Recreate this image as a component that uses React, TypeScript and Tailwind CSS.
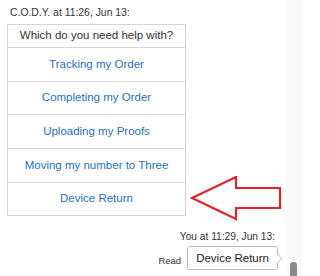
const options = [
  'Tracking my Order',
  'Completing my Order',
  'Uploading my Proofs',
  'Moving my number to Three',
  'Device Return',
];

export default function App() {
  return (
    <div className="flex h-[276px] w-[302px] overflow-hidden bg-white font-['Liberation_Sans',Arial,sans-serif]">
      <div className="relative flex-1">
        <div className="pl-[10px] pt-[6px] text-[10.4px] leading-[13px] text-[#333]">
          C.O.D.Y. at 11:26, Jun 13:
        </div>

        <div className="ml-[7px] mt-[5px] w-[179px] border border-[#d6d6d6] text-[11.5px]">
          <div className="flex h-[22px] items-center justify-center text-[#333]">
            Which do you need help with?
          </div>
          {options.map((opt) => (
            <div
              key={opt}
              className="flex h-[33.7px] items-center justify-center border-t border-[#d6d6d6] text-[#1f6fbf]"
            >
              {opt}
            </div>
          ))}
        </div>

        {/* annotation arrow */}
        <svg
          className="absolute left-[190px] top-[176px]"
          width="92"
          height="46"
          viewBox="0 0 92 46"
        >
          <polygon
            points="2,22 46,1 46,12 90,12 90,32 46,32 46,43"
            fill="none"
            stroke="#e3242b"
            strokeWidth="2.2"
            strokeLinejoin="miter"
          />
        </svg>

        <div className="mt-[14px] flex flex-col items-end pr-[4px]">
          <div className="mr-[8px] text-[10.2px] leading-[13px] text-[#333]">You at 11:29, Jun 13:</div>
          <div className="mt-[3px] flex items-center gap-[6px] pr-[5px]">
            <span className="mt-[6px] text-[9.5px] text-[#333]">Read</span>
            <div className="relative flex h-[24px] items-center rounded-[3px] border border-[#bdbdbd] px-[8px] text-[11.5px] text-[#222]">
              Device Return
              <svg
                className="absolute right-[-6px] top-[6px]"
                width="7"
                height="11"
                viewBox="0 0 7 11"
              >
                <polyline points="0.5,0.5 6,5.5 0.5,10.5" fill="white" stroke="#bdbdbd" strokeWidth="1" />
                <rect x="0" y="1.2" width="1" height="8.6" fill="white" />
              </svg>
            </div>
          </div>
        </div>
      </div>

      <div className="relative w-[15px] bg-[#f9f9f9]">
        <div className="absolute left-[3px] top-[262px] h-[20px] w-[7px] rounded-t-[4px] bg-[#8a8a8a]" />
      </div>
    </div>
  );
}
